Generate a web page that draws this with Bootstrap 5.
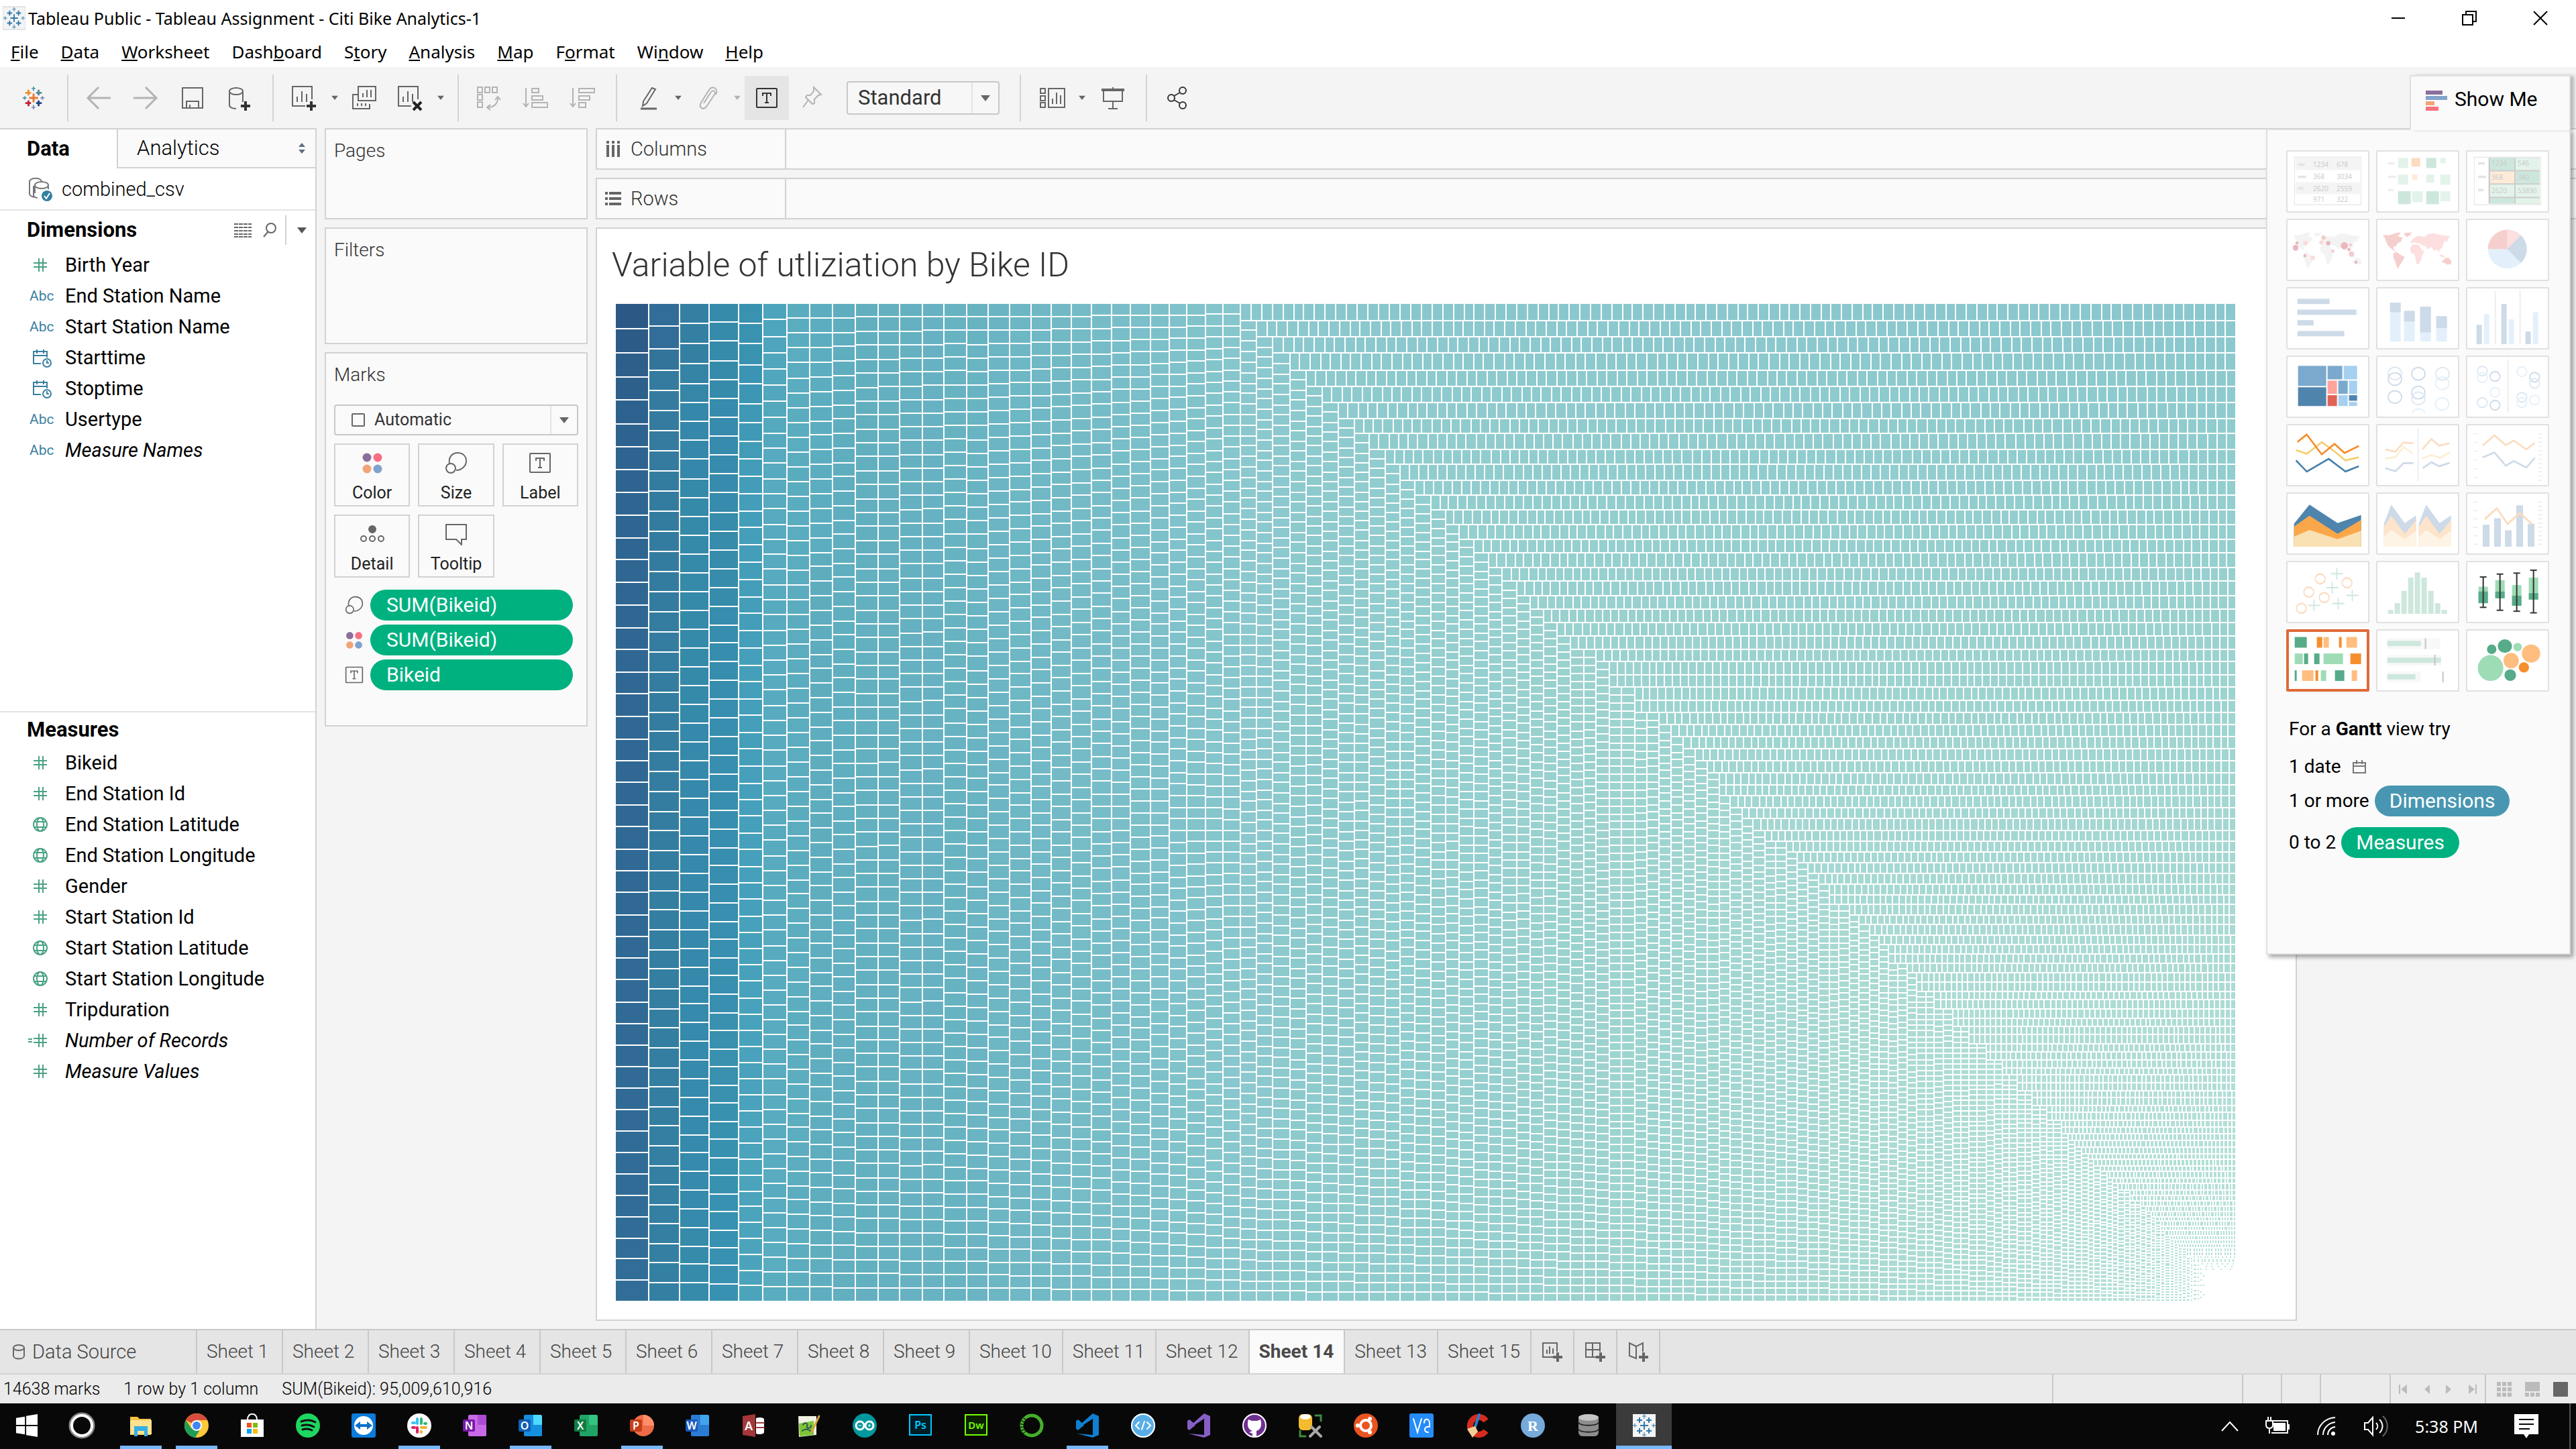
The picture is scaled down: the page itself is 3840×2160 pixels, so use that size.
<!DOCTYPE html>
<html lang="en">
<head>
<meta charset="utf-8">
<meta name="viewport" content="width=device-width, initial-scale=1">
<title>Tableau Public - Tableau Assignment - Citi Bike Analytics-1</title>
<link href="https://cdn.jsdelivr.net/npm/bootstrap@5.3.0/dist/css/bootstrap.min.css" rel="stylesheet">
<style>
:root{--line:#d2d2d2;--chrome:#f4f4f4;--ink:#333;--icon:#666;--green:#00b180}
body{font-family:Roboto,"Liberation Sans",sans-serif;font-size:28px;line-height:40px;color:#000;background:var(--chrome)}
button{font:inherit;color:inherit;background:none;border:0;padding:0}
svg{display:block;flex:none}
.titlebar{height:54px;background:#fff;font:25px/40px "Noto Sans",sans-serif;padding-left:4px}
.titlebar .win{width:106px}
.menubar{height:46px;background:#fff;font:26px/40px "Noto Sans",sans-serif;padding-left:16px;gap:33px}
.menubar a{color:#000;text-decoration:none}
.toolbar{height:91px;color:var(--icon)}
.toolbar button{width:70px;height:66px;display:flex;align-items:center;justify-content:center}
.toolbar .caret{width:22px}
.toolbar .slim{width:66px}
.toolbar .off{color:#b3b3b3}
.toolbar .pressed{background:#e5e5e5;color:#333}
.vsep{width:2px;height:70px;background:#d4d4d4;margin:0 10px 0 14px}
.vsep-wide{margin-left:30px}
.pick{border:2px solid #c8c8c8;border-radius:4px;position:relative;background:#f7f7f7}
.pick select{appearance:none;border:0;background:none;width:100%;height:100%;color:var(--ink);outline:0}
.pick .drop{position:absolute;right:0;top:0;bottom:0;width:40px;border-left:2px solid #e4e4e4;pointer-events:none;color:var(--icon)}
.pick .glyph{position:absolute;left:23px;top:10px;pointer-events:none}
.pick-fit{width:228px;height:50px;font-size:31px;font-weight:300}
.pick-fit select{padding-left:15px}
.pick-mark{height:46px;font-size:25px;font-weight:300;background:#fafafa}
.pick-mark select{padding-left:58px}
.datapane{width:472px;background:#fff;border-top:2px solid var(--line);border-right:2px solid var(--line)}
.ptabs{height:58px}
.ptabs .on{width:174px;font-weight:700;font-size:31px;padding-left:40px;text-align:left}
.ptabs .alt{border-left:2px solid var(--line);border-bottom:2px solid var(--line);background:#fafafa;font-size:31px;font-weight:300;padding:0 14px 0 28px}
.source{height:63px;border-bottom:2px solid #e4e4e4;padding-left:42px;gap:12px;font-size:29px;font-weight:300}
.phead{height:58px;padding:0 13px 0 40px;font-weight:700;font-size:31px}
.flist{list-style:none;margin:0;padding:0;font-size:29px}
.flist li{height:46px;display:flex;align-items:center}
.flist svg{margin:0 15px 0 40px}
.flist .green{color:#4aa283}
.flist .blue{color:#3a7fa0}
.abc{width:82px;padding-left:44px;font-size:21px;margin-right:15px;flex:none}
.dims{height:746px}
.measures{border-top:2px solid #e4e4e4}
.measures .phead{height:52px}
.cards{width:392px;margin:0 12px;gap:12px}
.shelfbox{border:2px solid var(--line);background:#fafafa;padding:12px 12px;font-weight:300;color:var(--ink)}
.h-pages{height:136px}.h-filters{height:174px}.h-marks{height:558px}
.mbtns{display:grid;grid-template-columns:1fr 1fr 1fr;gap:12px;margin:12px 0 18px}
.mbtns button{height:94px;border:2px solid var(--line);font-size:25px;line-height:30px;color:#222;font-weight:400;display:flex;flex-direction:column;align-items:center;justify-content:space-between;padding:10px 0 3px}
.pillrow{height:46px;margin-bottom:6px;padding:0 8px 0 16px;gap:10px}
.pill{background:var(--green);color:#fff;border-radius:23px;height:46px;line-height:46px;font-size:30px;font-weight:400}
.pillrow .pill{padding-left:24px;text-align:left}
.shelf{height:62px;border:2px solid var(--line);border-right:0;background:#fafafa;margin-bottom:12px}
.shelf div{width:282px;border-right:2px solid var(--line);padding-left:12px;gap:14px;font-weight:300;font-size:29px;color:var(--ink)}
.sheetview{background:#fff;border:2px solid var(--line);margin:0 416px 12px 0;padding:22px 88px 26px 28px}
.sheetview h1{font:300 50px/64px Roboto,sans-serif;color:#333;margin:0 0 26px -6px}
#treemap{min-height:0;overflow:hidden}
.showme{position:absolute;top:112px;right:8px;width:454px}
.smtab{width:240px;height:82px;background:#fafafa;border:2px solid #e0e0e0;border-bottom:0;margin-bottom:-2px;position:relative;z-index:1;font-size:30px;gap:11px;padding:0 22px 16px;box-shadow:6px 0 5px -1px rgba(0,0,0,.25)}
.smbody{background:#fafafa;border:2px solid #e0e0e0;box-shadow:4px 4px 6px rgba(0,0,0,.35);padding:30px 28px 142px}
.tiles{display:grid;grid-template-columns:repeat(3,124px);gap:9px 10px}
.tiles button{height:93px;background:#fff;border-radius:2px;box-shadow:inset 0 0 0 2px #e0e0e0}
.tiles button.chosen{box-shadow:inset 0 0 0 4px #e06a38}
.tiles text{font:10px "Open Sans",sans-serif;fill:#c9c9c9}
.hint{padding-left:4px;font-size:28px;margin-top:36px}
.hint .pill{padding:0 22px;font-size:30px;font-weight:400}
.sheets{height:68px;border-top:2px solid #c8c8c8;border-bottom:2px solid #d2d2d2;background:#e5e5e5;font-weight:300;color:#444}
.sheets button{border-right:2px solid #c8c8c8;padding:0 15px 0 14px;min-width:128px;text-align:left;white-space:nowrap}
.sheets .dsrc{width:294px;padding-left:18px;gap:10px;font-size:29px}
.sheets .on{background:#fafafa;font-weight:700;color:#4a4a4a}
.sheets .mini{min-width:64px;width:64px;display:flex;align-items:center;justify-content:center;padding:0}
.status{height:43px;background:#ebebeb;font-size:25px;line-height:44px;padding-left:5px;gap:35px;font-weight:300}
.status .cellbox{border-left:2px solid #c8c8c8}
.taskbar{height:68px;background:#080808;color:#fff;font:25px/40px "Noto Sans",sans-serif}
.taskbar .app{width:83px;display:flex;align-items:center;justify-content:center;border-bottom:5px solid transparent;border-top:3px solid transparent}
.taskbar .run{background:linear-gradient(#76b9ff,#76b9ff) bottom/62px 5px no-repeat border-box}
.taskbar .live{background:linear-gradient(#76b9ff,#76b9ff) bottom/100% 5px no-repeat border-box,#3b3b3b}
.taskbar text{font-family:"Noto Sans",sans-serif;fill:#fff;text-anchor:middle;font-weight:600}
.tray{gap:38px;padding-right:46px;border-right:2px solid #555;margin-right:8px}
</style>
</head>
<body class="d-flex flex-column vh-100 overflow-hidden">

<svg width="0" height="0" class="position-absolute" aria-hidden="true">
 <defs>
  <symbol id="hash" viewBox="0 0 42 40"><path d="M18 10v20M24 10v20M10 17h20M10 23h20" stroke="currentColor" stroke-width="2" fill="none"/></symbol>
  <symbol id="hasheq" viewBox="0 0 42 40"><path d="M18 10v20M24 10v20M10 17h20M10 23h20M2 18h6M2 22h6" stroke="currentColor" stroke-width="2" fill="none"/></symbol>
  <symbol id="globe" viewBox="0 0 42 40"><g stroke="currentColor" stroke-width="2" fill="none"><circle cx="20" cy="20" r="10"/><ellipse cx="20" cy="20" rx="5" ry="10"/><path d="M11 16h18M11 24h18"/></g></symbol>
  <symbol id="caltime" viewBox="0 0 42 40"><g stroke="currentColor" stroke-width="2" fill="none"><path d="M21 29H10V11h20v9M10 17h20M15 8v6M25 8v6"/><circle cx="30" cy="28" r="6"/><path d="M30 24v4h3"/></g></symbol>
  <symbol id="tri" viewBox="0 0 14 10"><path d="M0 1h14L7 10z" fill="currentColor"/></symbol>
  <symbol id="dots4" viewBox="0 0 34 34"><circle cx="9" cy="9" r="6.500" fill="#8a6f9b"/><circle cx="25" cy="9" r="6.500" fill="#f86e82"/><circle cx="9" cy="26" r="6.500" fill="#f1a478"/><circle cx="25" cy="26" r="6.500" fill="#7fa3cd"/></symbol>
  <symbol id="lasso" viewBox="0 0 34 34"><g fill="none" stroke="#666" stroke-width="2"><path d="M7 18C5 8 12 2 19 2c8 0 13 5 13 12 0 8-7 14-15 14"/><circle cx="9" cy="25" r="7"/></g></symbol>
  <symbol id="tbox" viewBox="0 0 34 34"><g fill="none" stroke="currentColor" stroke-width="2"><rect x="2" y="3" width="30" height="28" rx="1"/><path d="M11 14v-4h12v4M17 10v14M14 24h6"/></g></symbol>
  <symbol id="tabl" viewBox="0 0 36 36"><g stroke-width="2" fill="none"><path d="M18 12v12M12 18h12" /><path d="M11 6v8M7 10h8M25 6v8M21 10h8M11 22v8M7 26h8M25 22v8M21 26h8"/><path d="M18 1v7M15 4h6M18 28v7M15 32h6M4 15v6M1 18h6M32 15v6M29 18h6" stroke-width="1"/></g></symbol>
 </defs>
</svg>

<header>
 <div class="titlebar d-flex align-items-center">
  <svg width="34" height="36" viewBox="0 0 36 36" stroke="#2f78ad"><rect width="36" height="36" fill="#f4f4f4" stroke="#ccc"/><use href="#tabl"/></svg>
  <span class="ms-1">Tableau Public - Tableau Assignment - Citi Bike Analytics-1</span>
  <div class="d-flex ms-auto">
   <button class="win" aria-label="Minimize"><svg class="mx-auto" width="24" height="24" fill="none" stroke="#000" stroke-width="2"><path d="M2 12h20"/></svg></button>
   <button class="win" aria-label="Restore"><svg class="mx-auto" width="24" height="24" fill="none" stroke="#000" stroke-width="2"><path d="M2 7h15v15H2zM7 7V2h15v15h-5"/></svg></button>
   <button class="win" aria-label="Close"><svg class="mx-auto" width="24" height="24" fill="none" stroke="#000" stroke-width="2"><path d="M2 2l20 20M22 2L2 22"/></svg></button>
  </div>
 </div>
 <nav class="menubar d-flex align-items-center">
  <a href="#"><u>F</u>ile</a><a href="#"><u>D</u>ata</a><a href="#"><u>W</u>orksheet</a><a href="#">Dash<u>b</u>oard</a><a href="#">S<u>t</u>ory</a><a href="#"><u>A</u>nalysis</a><a href="#"><u>M</u>ap</a><a href="#">F<u>o</u>rmat</a><a href="#">Wi<u>n</u>dow</a><a href="#"><u>H</u>elp</a>
 </nav>
</header>

<div class="toolbar d-flex align-items-center" role="toolbar">
 <button aria-label="Start page" style="width:100px"><svg width="34" height="34" viewBox="0 0 36 36" fill="none"><path d="M18 11v14M11 18h14" stroke="#e8762c" stroke-width="3"/><path d="M10 5v9M5 10h9" stroke="#eb912c" stroke-width="3"/><path d="M26 5v9M22 10h9" stroke="#59879b" stroke-width="3"/><path d="M10 22v9M5 26h9" stroke="#c72035" stroke-width="3"/><path d="M26 22v9M22 26h9" stroke="#1f457e" stroke-width="3"/><path d="M18 0v7M15 3h6M4 15v6M1 18h6" stroke="#5a9bb0" stroke-width="2"/><path d="M18 29v7M15 33h6M32 15v6M29 18h6" stroke="#7f93bd" stroke-width="2"/></svg></button>
 <span class="vsep ms-0"></span>
 <button class="off" aria-label="Back"><svg width="40" height="40" fill="none" stroke="currentColor" stroke-width="3"><path d="M20 4L4 20l16 16M4 20h34"/></svg></button>
 <button class="off" aria-label="Forward"><svg width="40" height="40" fill="none" stroke="currentColor" stroke-width="3"><path d="M20 4l16 16-16 16M36 20H2"/></svg></button>
 <button aria-label="Save"><svg width="40" height="40" fill="none" stroke="currentColor" stroke-width="2"><path d="M5 5h30v30H5zM11 35V25h18v10M16 35v-5"/></svg></button>
 <button aria-label="New data source"><svg width="40" height="40" fill="none" stroke="currentColor" stroke-width="2"><ellipse cx="15" cy="10" rx="10" ry="5"/><path d="M5 10v21c0 3 5 5 10 5M25 10v16"/><path d="M29 25v14M22 32h14" stroke="#333" stroke-width="4"/></svg></button>
 <span class="vsep"></span>
 <button aria-label="New worksheet"><svg width="40" height="40" fill="none" stroke="currentColor" stroke-width="2"><path d="M22 32H3V3h29v19M10 26v-8M17 26V10M24 26V14"/><path d="M31 25v14M24 32h14" stroke="#333" stroke-width="4"/></svg></button>
 <button class="caret" aria-label="New worksheet menu"><svg width="10" height="7"><use href="#tri"/></svg></button>
 <button class="slim" aria-label="Duplicate"><svg width="40" height="40" fill="none" stroke="currentColor" stroke-width="2"><path d="M11 3h26v21H11zM18 19v-6M24 19V8M30 19V8M11 15H3v21h25v-7M10 32v-4M16 32v-4M22 32v-4"/></svg></button>
 <button aria-label="Clear sheet"><svg width="40" height="40" fill="none" stroke="currentColor" stroke-width="2"><path d="M22 32H3V3h29v19M10 26v-8M17 26V10M24 26V14"/><path d="M25 26l12 12M37 26L25 38" stroke="#222" stroke-width="4"/></svg></button>
 <button class="caret" aria-label="Clear menu"><svg width="10" height="7"><use href="#tri"/></svg></button>
 <span class="vsep"></span>
 <button class="off" aria-label="Swap rows and columns"><svg width="40" height="40" fill="none" stroke="currentColor" stroke-width="2"><path d="M3 4h7v8H3zM14 4h7v8h-7zM25 4h7v8h-7zM3 15h7v8H3zM3 26h7v8H3zM18 34c10 0 15-6 15-14M29 23l4-5 4 5M22 30l-5 4 5 4"/></svg></button>
 <button class="off" aria-label="Sort ascending"><svg width="40" height="40" fill="none" stroke="currentColor" stroke-width="2"><path d="M5 5v28M1 28l4 5 4-5M14 6h10v6H14zM14 17h16v6H14zM14 27h23v7H14z"/></svg></button>
 <button class="off" aria-label="Sort descending"><svg width="40" height="40" fill="none" stroke="currentColor" stroke-width="2"><path d="M5 5v28M1 28l4 5 4-5M14 6h23v6H14zM14 17h16v6H14zM14 27h10v7H14z"/></svg></button>
 <span class="vsep"></span>
 <button aria-label="Highlight"><svg width="40" height="40" fill="none" stroke="currentColor" stroke-width="2"><path d="M27 5l5 2-13 21-6 4 1-7z"/><path d="M10 36h24" stroke-width="3"/></svg></button>
 <button class="caret" aria-label="Highlight menu"><svg width="10" height="7"><use href="#tri"/></svg></button>
 <button class="off slim" aria-label="Group members"><svg width="40" height="40" fill="none" stroke="currentColor" stroke-width="2"><path d="M14 28L25 11c3-4 8 0 5 4L18 33c-5 6-12 1-8-6L22 8c5-8 15-1 10 7"/></svg></button>
 <button class="caret off" aria-label="Group menu"><svg width="10" height="7"><use href="#tri"/></svg></button>
 <button class="slim pressed" aria-label="Show mark labels"><svg width="38" height="34"><use href="#tbox"/></svg></button>
 <button class="off" aria-label="Fix axes"><svg width="40" height="40" fill="none" stroke="currentColor" stroke-width="2"><path d="M22 4l11 11-4 1-6 6v6l-3 1-10-10 2-3h5l5-6zM14 23L6 34"/></svg></button>
 <div class="pick pick-fit ms-3"><select aria-label="Fit"><option>Standard</option></select><span class="drop d-flex align-items-center justify-content-center"><svg width="14" height="10"><use href="#tri"/></svg></span></div>
 <span class="vsep vsep-wide"></span>
 <button aria-label="Show or hide cards" class="slim ms-1"><svg width="42" height="40" fill="none" stroke="currentColor" stroke-width="2"><path d="M3 6h7v7H3zM3 17h7v7H3zM3 27h7v7H3zM15 6h24v28H15zM21 29v-8M27 29V12M33 29V16"/></svg></button>
 <button class="caret" aria-label="Cards menu"><svg width="10" height="7"><use href="#tri"/></svg></button>
 <button aria-label="Presentation mode"><svg width="40" height="40" fill="none" stroke="currentColor" stroke-width="2"><path d="M20 4v4M6 9v16h28V9M20 25v11M13 36h14"/><path d="M3 8h34" stroke-width="4"/></svg></button>
 <span class="vsep"></span>
 <button aria-label="Share"><svg width="40" height="40" fill="none" stroke="#333" stroke-width="2"><circle cx="11" cy="20" r="5"/><circle cx="28" cy="9" r="5"/><circle cx="28" cy="31" r="5"/><path d="M15 17l9-5M15 23l9 5"/></svg></button>
</div>

<main class="d-flex flex-grow-1" style="min-height:0">
 <aside class="datapane flex-shrink-0">
  <div class="ptabs d-flex">
   <button class="on">Data</button>
   <button class="alt flex-grow-1 d-flex align-items-center justify-content-between">Analytics <svg width="12" height="16" fill="#5f6f7d"><path d="M6 0l5 6H1zM6 16l5-6H1z"/></svg></button>
  </div>
  <div class="source d-flex align-items-center">
   <svg width="38" height="38" fill="none" stroke="#777" stroke-width="2"><path d="M2 8c0-7 18-7 18 0M2 8v18c0 3 4 4 7 5M8 14v14c0 2 3 4 6 4"/><ellipse cx="20" cy="13" rx="10" ry="5"/><path d="M30 13v6M10 13v12"/><circle cx="28" cy="29" r="8" fill="#3380a0" stroke="none"/><path d="M24 29l3 4 5-8" stroke="#fff"/></svg>
   <span>combined_csv</span>
  </div>
  <section class="dims">
   <div class="phead d-flex align-items-center"><span>Dimensions</span>
    <svg class="ms-auto" width="26" height="22" stroke="#666" stroke-width="2" stroke-dasharray="6 1"><path d="M0 2h26M0 7h26M0 12h26M0 17h26M0 21h26"/></svg>
    <svg class="ms-3" width="22" height="24" fill="none" stroke="#666" stroke-width="2"><circle cx="13" cy="9" r="7"/><path d="M9 14l-7 8"/></svg>
    <span class="ms-2 me-3 ps-1"><svg width="2" height="44"><rect width="2" height="44" fill="#d2d2d2"/></svg></span>
    <svg width="14" height="10" color="#555"><use href="#tri"/></svg></div>
   <ul class="flist">
    <li><svg class="green" width="42" height="40"><use href="#hash"/></svg>Birth Year</li>
    <li><span class="abc blue">Abc</span>End Station Name</li>
    <li><span class="abc blue">Abc</span>Start Station Name</li>
    <li><svg class="blue" width="42" height="40"><use href="#caltime"/></svg>Starttime</li>
    <li><svg class="blue" width="42" height="40"><use href="#caltime"/></svg>Stoptime</li>
    <li><span class="abc blue">Abc</span>Usertype</li>
    <li><span class="abc blue">Abc</span><em>Measure Names</em></li>
   </ul>
  </section>
  <section class="measures">
   <div class="phead d-flex align-items-center">Measures</div>
   <ul class="flist">
    <li><svg class="green" width="42" height="40"><use href="#hash"/></svg>Bikeid</li>
    <li><svg class="green" width="42" height="40"><use href="#hash"/></svg>End Station Id</li>
    <li><svg class="green" width="42" height="40"><use href="#globe"/></svg>End Station Latitude</li>
    <li><svg class="green" width="42" height="40"><use href="#globe"/></svg>End Station Longitude</li>
    <li><svg class="green" width="42" height="40"><use href="#hash"/></svg>Gender</li>
    <li><svg class="green" width="42" height="40"><use href="#hash"/></svg>Start Station Id</li>
    <li><svg class="green" width="42" height="40"><use href="#globe"/></svg>Start Station Latitude</li>
    <li><svg class="green" width="42" height="40"><use href="#globe"/></svg>Start Station Longitude</li>
    <li><svg class="green" width="42" height="40"><use href="#hash"/></svg>Tripduration</li>
    <li><svg class="green" width="42" height="40"><use href="#hasheq"/></svg><em>Number of Records</em></li>
    <li><svg class="green" width="42" height="40"><use href="#hash"/></svg><em>Measure Values</em></li>
   </ul>
  </section>
 </aside>

 <div class="cards d-flex flex-column flex-shrink-0">
  <section class="shelfbox h-pages">Pages</section>
  <section class="shelfbox h-filters">Filters</section>
  <section class="shelfbox h-marks">
   <div class="mb-4">Marks</div>
   <div class="pick pick-mark"><svg class="glyph" width="22" height="22" fill="none" stroke="#666" stroke-width="2"><rect x="2" y="2" width="18" height="18" rx="1"/></svg><select aria-label="Mark type"><option>Automatic</option></select><span class="drop d-flex align-items-center justify-content-center"><svg width="14" height="10"><use href="#tri"/></svg></span></div>
   <div class="mbtns">
    <button><svg width="34" height="34"><use href="#dots4"/></svg>Color</button>
    <button><svg width="34" height="34"><use href="#lasso"/></svg>Size</button>
    <button><svg width="34" height="34" color="#666"><use href="#tbox"/></svg>Label</button>
    <button><svg width="40" height="34" fill="none" stroke="#666" stroke-width="2"><circle cx="20" cy="10" r="5" fill="#666"/><circle cx="7" cy="24" r="4"/><circle cx="20" cy="24" r="4"/><circle cx="33" cy="24" r="4"/></svg>Detail</button>
    <button><svg width="34" height="34" fill="none" stroke="#666" stroke-width="2"><path d="M2 3h30v22h-7v8l-8-8H2z"/></svg>Tooltip</button>
   </div>
   <div class="pillrow d-flex align-items-center"><svg width="28" height="28"><use href="#lasso"/></svg><button class="pill flex-grow-1">SUM(Bikeid)</button></div>
   <div class="pillrow d-flex align-items-center"><svg width="28" height="28"><use href="#dots4"/></svg><button class="pill flex-grow-1">SUM(Bikeid)</button></div>
   <div class="pillrow d-flex align-items-center"><svg width="28" height="28" color="#666"><use href="#tbox"/></svg><button class="pill flex-grow-1">Bikeid</button></div>
  </section>
 </div>

 <div class="d-flex flex-column flex-grow-1" style="min-width:0">
  <div class="shelf d-flex"><div class="d-flex align-items-center"><svg width="24" height="24" stroke="#666" stroke-width="4"><path d="M4 0v4M12 0v4M20 0v4M4 6v18M12 6v18M20 6v18"/></svg>Columns</div></div>
  <div class="shelf d-flex"><div class="d-flex align-items-center"><svg width="24" height="24" stroke="#666" stroke-width="4"><path d="M0 4h4M0 12h4M0 20h4M6 4h18M6 12h18M6 20h18"/></svg>Rows</div></div>
  <section class="sheetview flex-grow-1 d-flex flex-column" style="min-height:0">
   <h1>Variable of utliziation by Bike ID</h1>
   <div id="treemap" class="flex-grow-1"></div>
  </section>
 </div>
</main>

<footer>
 <div class="sheets d-flex">
  <button class="dsrc d-flex align-items-center"><svg width="20" height="24" fill="none" stroke="#666" stroke-width="2"><ellipse cx="10" cy="6" rx="8" ry="4"/><path d="M2 6v12c0 6 16 6 16 0V6"/></svg>Data Source</button>
  <button>Sheet 1</button><button>Sheet 2</button><button>Sheet 3</button><button>Sheet 4</button><button>Sheet 5</button><button>Sheet 6</button><button>Sheet 7</button><button>Sheet 8</button><button>Sheet 9</button><button>Sheet 10</button><button>Sheet 11</button><button>Sheet 12</button><button class="on">Sheet 14</button><button>Sheet 13</button><button>Sheet 15</button>
  <button class="mini" aria-label="New worksheet"><svg width="32" height="32" fill="none" stroke="#666" stroke-width="2"><path d="M17 24H2V3h21v13M8 19v-6M12 19V8M17 19v-8"/><path d="M24 17v14M17 24h14" stroke-width="4"/></svg></button>
  <button class="mini" aria-label="New dashboard"><svg width="32" height="32" fill="none" stroke="#666" stroke-width="2"><path d="M17 24H2V3h21v13M2 13h21M12 3v21"/><path d="M24 17v14M17 24h14" stroke-width="4"/></svg></button>
  <button class="mini" aria-label="New story"><svg width="32" height="32" fill="none" stroke="#666" stroke-width="2"><path d="M23 16V3l-10 5v18L3 22V3l10 5"/><path d="M24 17v14M17 24h14" stroke-width="4"/></svg></button>
 </div>
 <div class="status d-flex">
  <span>14638 marks</span><span>1 row by 1 column</span><span>SUM(Bikeid): 95,009,610,916</span>
  <div class="d-flex ms-auto">
   <span class="cellbox" style="width:283px"></span><span class="cellbox" style="width:58px"></span><span class="cellbox" style="width:58px"></span><span class="cellbox" style="width:104px"></span>
   <span class="cellbox d-flex align-items-center justify-content-center gap-4" style="width:142px"><svg width="14" height="14" fill="#bbb"><path d="M0 0h2v14H0zM12 0v14L3 7z"/></svg><svg width="8" height="14" fill="#bbb"><path d="M8 0v14L0 7z"/></svg><svg width="8" height="14" fill="#bbb"><path d="M0 0v14l8-7z"/></svg><svg width="14" height="14" fill="#bbb"><path d="M12 0h2v14h-2zM2 0v14l9-7z"/></svg></span>
   <span class="cellbox d-flex align-items-center justify-content-center ps-1" style="width:136px;gap:20px"><svg width="22" height="22" fill="#bbb"><path d="M0 0h6v6H0zM8 0h6v6H8zM16 0h6v6h-6zM0 8h6v6H0zM8 8h6v6H8zM16 8h6v6h-6zM0 16h6v6H0zM8 16h6v6H8zM16 16h6v6h-6z"/></svg><svg width="22" height="22" fill="#bbb"><path d="M0 0h22v14H0zM0 16h6v6H0zM8 16h6v6H8zM16 16h6v6h-6z"/></svg><svg width="22" height="22"><rect width="22" height="22" rx="1" fill="#666"/></svg></span>
  </div>
 </div>
 <div class="taskbar d-flex">
  <button class="app" aria-label="Start" style="width:80px"><svg width="34" height="34" viewBox="0 0 36 36" fill="#fff"><path d="M1 6l14-2v13H1zM17 3l18-3v17H17zM1 19h14v13L1 30zM17 19h18v17l-18-3z"/></svg></button>
  <button class="app" aria-label="Cortana" style="width:84px"><svg width="40" height="40" fill="none"><circle cx="20" cy="20" r="17" stroke="#888" stroke-width="5"/><circle cx="20" cy="20" r="15" stroke="#fff" stroke-width="4"/></svg></button>
  <div id="apps" class="d-flex ms-1"></div>
  <div class="tray d-flex align-items-center ms-auto">
   <svg width="28" height="20" fill="none" stroke="#fff" stroke-width="2"><path d="M2 17L14 4l12 13"/></svg>
   <svg width="38" height="32" fill="none" stroke="#fff" stroke-width="2"><path d="M13 8h21v18H10M36 13v8M5 2v6M9 2v6M2 8h10v6c0 4-3 5-5 5s-5-1-5-5zM7 19v8"/><path d="M14 12h16v10H14z" fill="#fff"/></svg>
   <svg width="32" height="32" fill="none" stroke="#fff" stroke-width="2"><path d="M3 29C3 15 14 4 29 3M11 29c0-10 8-18 18-19M18 29c0-6 4-11 11-12"/><circle cx="26" cy="27" r="3" fill="#fff" stroke="none"/></svg>
   <svg width="40" height="36" fill="none" stroke="#fff" stroke-width="2"><path d="M3 13h5l7-8v26l-7-8H3zM20 13c3 3 3 7 0 10M25 8c6 6 6 14 0 20"/><path d="M30 3c9 8 9 22 0 30" stroke="#666"/></svg>
   <span>5:38 PM</span>
   <svg class="ms-3" width="36" height="38"><path d="M0 1h36v30H22l-4 6-4-6H0z" fill="#fff"/><path d="M7 9h22M7 16h22M7 23h16" stroke="#080808" stroke-width="2"/></svg>
  </div>
 </div>
</footer>

<section class="showme" aria-label="Show Me">
 <button class="smtab d-flex align-items-center ms-auto mt-0">
  <svg class="mt-2" width="32" height="32"><path d="M0 1h25v6H0z" fill="#8a6f9b"/><path d="M0 9h32v6H0z" fill="#82a4cb"/><path d="M0 17h13v6H0z" fill="#f1a478"/><path d="M0 25h19v6H0z" fill="#f9717f"/></svg><span class="mt-1">Show Me</span></button>
 <div class="smbody">
  <div class="tiles" id="tiles"></div>
  <div class="hint">
   <div class="mb-3">For a <b>Gantt</b> view try</div>
   <div class="d-flex align-items-center">1 date <svg class="ms-3" width="22" height="20" fill="none" stroke="#777" stroke-width="2"><path d="M2 4h18v15H2zM2 9h18M7 0v6M15 0v6"/></svg></div>
   <div class="d-flex align-items-center mt-2 gap-2">1 or more <button class="pill" style="background:#4996b2">Dimensions</button></div>
   <div class="d-flex align-items-center mt-3 gap-2">0 to 2 <button class="pill">Measures</button></div>
  </div>
 </div>
</section>

<script>
// ---- Treemap: sorted mark sizes given as [rank, area] knots ----
const KNOTS=[[0,1900],[2,1810],[6,1730],[15,1690],[46,1600],[48,1410],[97,1350],[100,1270],[150,1240],[204,1160],[210,990],[262,890],[270,810],[330,785],[400,760],[470,735],[540,710],[700,685],[900,668],[1100,625],[1281,580],[2100,398],[5838,246],[11341,84],[12681,45],[13237,24],[13492,11],[13600,6],[13800,2.5],[14637,.2]];
const RAMP=[[0,184,227,218],[84,177,222,214],[246,154,210,207],[400,138,200,206],[580,116,187,199],[650,108,181,196],[700,99,176,192],[800,88,171,191],[950,70,160,187],[1150,58,147,178],[1270,53,136,169],[1400,52,124,159],[1560,50,112,153],[1720,47,101,145],[1900,44,88,133]];
function lerp(table,x){
  let k=1;while(k<table.length-1&&table[k][0]<x)k++;
  const a=table[k-1],b=table[k],t=(x-a[0])/(b[0]-a[0]);
  return a.slice(1).map((v,i)=>v+(b[i+1]-v)*t);
}
function drawTreemap(){
  const host=document.getElementById('treemap'),W=host.clientWidth&~1,H=host.clientHeight&~1;
  const N=14638,vals=[];let sum=0;
  for(let i=0;i<N;i++){const v=lerp(KNOTS,i)[0];vals.push(v);sum+=v}
  const k=W*H/sum,PHI=1.62,buckets={};
  const snap=v=>Math.round(v/2)*2;
  let x=0,y=0,i=0;
  while(i<N&&W-x>.5&&H-y>.5){
    const w=W-x,h=H-y,vert=w>=h,len=vert?h:w;
    let s=0,j=i,best=Infinity;
    while(j<N){
      const s2=s+vals[j]*k,t=s2/len,side=vals[j]*k/t,r=t/side,score=Math.abs(Math.log(r/PHI));
      if(score>best)break;
      best=score;s=s2;j++;
    }
    const t=s/len;let p=0;
    for(let m=i;m<j;m++){
      const d=vals[m]*k/t;
      const r=vert?[x,y+p,x+t,y+p+d]:[x+p,y,x+p+d,y+t];p+=d;
      const a=snap(r[0]),b=snap(r[1]),c=snap(r[2])-a-2,e=snap(r[3])-b-2;
      if(c>0&&e>0){const q=Math.round(vals[m]/8)*8;(buckets[q]=buckets[q]||[]).push(`M${a} ${b}h${c}v${e}h${-c}z`)}
    }
    if(vert)x+=t;else y+=t;
    i=j;
  }
  host.innerHTML=`<svg width="${W}" height="${H}" shape-rendering="crispEdges" role="img" aria-label="Treemap of bikes by Bikeid">`+Object.entries(buckets).map(([q,d])=>`<path fill="rgb(${lerp(RAMP,+q).map(Math.round)})" d="${d.join('')}"/>`).join('')+'</svg>';
}
drawTreemap();addEventListener('resize',drawTreemap);

// ---- Show Me thumbnails ----
const R=(x,y,w,h,f)=>`<rect x="${x}" y="${y}" width="${w}" height="${h}" fill="${f}"/>`;
const E=(x,y,rx,ry,f)=>`<ellipse cx="${x}" cy="${y}" rx="${rx}" ry="${ry}" fill="${f}"/>`;
const O=(x,y,rx,ry,c)=>`<ellipse cx="${x}" cy="${y}" rx="${rx}" ry="${ry}" fill="none" stroke="${c}" stroke-width="5"/>`;
const L=(p,c,w=7)=>`<polyline points="${p}" fill="none" stroke="${c}" stroke-width="${w}" stroke-linejoin="round"/>`;
const P=(p,f)=>`<polygon points="${p}" fill="${f}"/>`;
const X=(x,y,s)=>`<text x="${x}" y="${y}">${s}</text>`;
const A='#cddae8',B='#e3f0fb',C='#cde7dc',D='#e3f3e9',G='#eee';
const NA='30,62 60,62 75,58 100,52 112,54 96,66 118,72 112,86 96,94 88,104 76,106 80,116 92,126 82,122 66,112 52,100 46,88 38,72',GL='125,54 160,52 152,62 138,70 128,62',SA='78,130 92,126 108,136 128,146 118,160 108,174 100,184 104,190 94,186 86,164 76,144',AF='152,112 162,98 184,98 196,104 204,118 216,124 206,138 202,156 190,172 180,172 176,150 170,134 156,130',EU='154,92 162,78 180,66 200,66 216,70 232,58 260,56 290,62 332,66 322,74 318,88 306,84 300,98 296,110 286,116 280,128 272,116 262,122 254,116 248,106 232,116 222,104 206,100 196,94 178,92 168,88 160,94',ID='280,134 300,138 312,146 292,146',AU='292,164 312,148 322,148 336,158 336,172 318,174 304,166';
const world=(a,b)=>P(NA,a)+P(GL,a)+P(SA,a)+P(AF,b)+P(EU,b)+P(ID,b)+P(AU,a);
const ticks=(x,n,h,s)=>Array.from({length:n},(_,i)=>R(x,h+i*s,18,4,G)).join('');
const TALL=236,LOW=193;
const tiles=[
['Text table',TALL,`<rect x="37" y="26" width="297" height="180" fill="#fff" stroke="#e4e4e4" stroke-width="3"/>`+R(41,29,289,46,'#f4f4f4')+R(41,121,289,45,'#f4f4f4')+R(53,50,30,9,'#e4e4e4')+R(53,96,36,9,'#e4e4e4')+R(53,139,24,9,'#e4e4e4'),X(40,25,'1234')+X(75,25,'678')+X(40,43,'368')+X(75,43,'3034')+X(40,61,'2620')+X(75,61,'2559')+X(40,77,'971')+X(75,77,'322')],
['Heat map',TALL,R(53,45,30,9,G)+R(53,96,36,9,G)+R(53,146,24,9,G)+R(98,29,45,38,D)+R(158,29,39,33,'#fbdcc0')+R(224,29,45,38,C)+R(287,29,24,20,D)+R(98,92,45,38,D)+R(161,92,24,20,'#fdebd8')+R(224,92,36,31,D)+R(287,92,45,38,D)+R(98,155,57,49,C)+R(161,155,48,41,D)+R(224,155,57,49,C)+R(287,155,45,38,D)],
['Highlight table',TALL,`<rect x="37" y="26" width="297" height="180" fill="#fff" stroke="#e4e4e4" stroke-width="3"/>`+R(101,29,229,173,'#ccc')+R(54,45,30,9,'#e4e4e4')+R(54,96,36,9,'#e4e4e4')+R(54,146,24,9,'#e4e4e4')+R(108,29,108,46,C)+R(222,29,108,46,D)+R(108,80,108,45,'#fdebd8')+R(222,80,108,45,C)+R(108,130,108,46,D)+R(222,130,108,46,D)+R(108,181,108,20,C)+R(222,181,108,20,D),X(38,23,'1234')+X(77,23,'546')+X(38,44,'368')+X(77,44,'340')+X(38,64,'2620')+X(77,64,'53890')],
['Symbol map',TALL,world('#f3f3f3','#f3f3f3')+[[48,92,7,'#e9b7bd'],[42,110,13,'#e9b7bd'],[86,92,10,'#fbdada'],[84,140,7,'#e9b7bd'],[119,148,10,'#fbdada'],[167,72,10,'#f4cccc'],[158,90,10,'#fbdada'],[188,93,10,'#e9b7bd'],[209,122,7,'#f4cccc'],[260,102,16,'#e9b7bd'],[281,117,7,'#e9b7bd'],[288,99,7,'#f4cccc'],[292,134,12,'#f4cccc'],[312,165,7,'#e9b7bd']].map(c=>E(c[0],c[1],c[2],c[2]*.84,c[3])).join('')],
['Filled map',TALL,world('#f5cfcd','#fddfdf')],
['Pie chart',TALL,E(185,115,87,73,B)+`<path d="M185 115V42A87 73 0 0 0 98 115z" fill="#f5cfcd"/><path d="M185 115V42A87 73 0 0 1 246 63z" fill="#fddfdf"/><path d="M185 115L246 63A87 73 0 0 1 246 167z" fill="${A}"/>`],
['Horizontal bars',TALL,R(50,44,144,20,A)+R(50,85,264,20,A)+R(50,125,72,20,A)+R(50,166,210,20,A)],
['Stacked bars',TALL,R(62,59,48,147,B)+R(62,59,48,36,A)+R(125,90,48,116,B)+R(125,90,48,40,A)+R(197,74,48,132,B)+R(197,74,48,97,A)+R(269,110,48,96,B)+R(269,110,48,45,A)],
['Side-by-side bars',TALL,R(128,14,6,202,G)+R(239,14,6,202,G)+R(47,143,24,73,A)+R(80,102,24,114,B)+R(158,64,24,152,A)+R(191,122,24,94,B)+R(266,168,24,48,A)+R(299,95,24,121,B)],
['Treemap',TALL,R(53,39,126,76,'#7ba9ce')+R(53,120,126,71,'#4f84ad')+R(185,39,66,51,'#7ba9ce')+R(257,39,60,51,'#a6d0f0')+R(185,95,42,50,'#ffa49d')+R(233,95,42,50,'#7ba9ce')+R(281,95,36,50,'#a6d0f0')+R(185,150,42,41,'#e16358')+R(233,150,42,41,'#a6d0f0')+R(281,150,36,21,'#4f84ad')+R(281,176,36,15,'#a6d0f0')],
['Circle views',TALL,O(84,68,30,24,'#dbe7f2')+O(84,89,30,24,A)+O(84,157,30,24,A)+O(189,69,30,24,A)+O(189,140,30,24,A)+O(189,162,30,24,'#dbe7f2')+`<path d="M161 220c4-24 52-24 58 0" fill="none" stroke="${B}" stroke-width="5"/>`+O(297,69,30,24,'#dbe7f2')+O(296,105,30,24,B)+O(295,183,30,24,B)],
['Side-by-side circles',TALL,R(185,14,6,202,G)+O(73,59,22,18,'#dbe7f2')+O(73,84,22,18,B)+O(130,79,22,18,A)+O(130,139,22,18,B)+O(73,178,22,18,'#dbe7f2')+O(130,188,22,18,A)+O(250,61,22,18,B)+O(307,82,22,18,A)+O(307,105,22,18,'#dbe7f2')+O(250,158,22,18,'#dbe7f2')+O(250,178,22,18,B)+O(307,168,22,18,B)],
['Continuous lines',TALL,L('44,99 92,113 159,69 215,103 265,138 325,126','#f6cd6d')+L('50,68 92,40 159,115 216,75 261,110 325,83','#f58b26')+L('44,138 92,180 190,132 265,180 325,160','#4781ad')],
['Discrete lines',TALL,R(185,14,6,202,G)+L('41,96 86,105 123,70 167,73','#fbdcc0')+L('41,131 86,125 123,88 163,111','#fdeed2')+L('41,167 86,179 123,148 167,148',A)+L('207,96 247,57 282,82 329,73','#fbdcc0')+L('205,130 247,118 287,128 329,107','#fdeed2')+L('209,167 247,145 282,160 329,147',A)],
['Dual lines',TALL,ticks(33,6,35,33)+ticks(324,12,35,16)+L('74,82 127,43 178,80 214,63 270,96 308,72','#fbdcc0')+L('74,127 127,108 178,158 214,140 270,165 308,128',A)],
['Area chart',LOW,P('35,97 104,38 230,95 335,70 335,168 35,168','#4f84ad')+P('35,106 104,72 230,128 335,85 335,168 35,168','#faa74a')+P('35,137 104,116 230,145 335,119 335,168 35,168','#f9e1b3')],
['Discrete area',LOW,[35,191].map(o=>`<g transform="translate(${o} 0)">`+P('0,97 33,38 93,95 144,71 144,168 0,168',A)+P('0,106 33,72 93,128 144,85 144,168 0,168','#fde4ca')+P('0,137 33,116 93,144 144,119 144,168 0,168','#fef4e6')+'</g>').join('')],
['Dual combination',LOW,ticks(33,6,28,26)+ticks(324,11,28,13)+R(75,100,30,68,A)+R(126,80,30,88,A)+R(174,117,30,51,A)+R(225,40,30,128,A)+R(276,97,30,71,A)+L('84,83 138,49 186,98 240,64 294,97','#fbdcc0')],
['Scatter plot',LOW,O(152,56,22,15,'#fbdcc0')+O(101,97,22,15,'#fbdcc0')+O(170,114,22,15,'#fbdcc0')+O(68,147,22,15,'#fbdcc0')+O(272,68,22,15,'#fbdcc0')+[[227,40],[206,83],[296,107],[233,132],[125,138]].map(p=>R(p[0]-27,p[1]-2,54,4,C)+R(p[0]-3,p[1]-18,5,36,C)).join('')],
['Histogram',LOW,[12,33,71,112,128,112,71,33,12].map((h,i)=>R(53+i*30,164-h,24,h,C)).join('')],
['Box plot',LOW,[[56,80,95,131,50,144],[131,60,95,116,41,153],[206,75,108,139,38,156],[281,52,100,120,29,161]].map(b=>R(b[0],b[1],42,b[3]-b[1],'#9edcb6')+R(b[0],b[2],42,b[3]-b[2],'#57ab88')+R(b[0]+18,b[4],6,b[5]-b[4],'#333')+R(b[0]+6,b[4]-2,30,4,'#333')+R(b[0]+6,b[5]-2,30,4,'#333')).join('')],
['Gantt',LOW,R(38,24,54,33,'#57ab88')+R(137,24,24,33,'#f58f2d')+R(167,24,24,33,'#ffbd80')+R(236,24,12,33,'#f58f2d')+R(269,24,48,33,'#ffbd80')+R(38,75,36,33,'#9edcb6')+R(80,75,18,33,'#57ab88')+R(125,75,24,33,'#57ab88')+R(167,75,87,33,'#9edcb6')+R(287,75,48,33,'#f58f2d')+R(38,127,9,33,'#57ab88')+R(71,127,51,33,'#ffbd80')+R(131,127,12,33,'#f58f2d')+R(155,127,24,33,'#9edcb6')+R(218,127,42,33,'#57ab88')+R(293,127,24,33,'#ffbd80')],
['Bullet graph',LOW,R(50,28,237,33,'#f8f8f8')+R(50,79,240,33,'#f8f8f8')+R(50,131,150,33,'#f8f8f8')+R(50,36,150,16,C)+R(50,88,240,16,C)+R(50,139,126,16,C)+R(218,28,6,33,'#c4c4c4')+R(260,79,6,33,'#c4c4c4')+R(296,131,6,33,'#c4c4c4')],
['Packed bubbles',LOW,E(110,120,57,40,'#9edcb6')+E(115,62,21,15,'#57ab88')+E(174,52,32,21,'#57ab88')+E(231,55,19,13,'#9edcb6')+E(202,97,34,24,'#ffbd80')+E(291,75,41,28,'#ffbd80')+E(259,118,23,16,'#f58f2d')+E(198,142,26,18,'#57ab88')]];
document.getElementById('tiles').innerHTML=tiles.map(([n,u,g,t=''])=>`<button aria-label="${n}" class="${n=='Gantt'?'chosen':''}"><svg width="124" height="93"><g transform="scale(.3333 ${93/u})">${g}</g>${t}</svg></button>`).join('');

// ---- Taskbar applications ----
const office=(a,b,c,ch)=>`<rect x="8" y="2" width="27" height="32" rx="2" fill="${a}"/><path d="M22 2h11l2 2v13H22z" fill="${b}"/><rect x="0" y="9" width="18" height="18" rx="2" fill="${c}"/><text x="9" y="24" font-size="16">${ch}</text>`;
const disc=(f,g)=>`<circle cx="18" cy="18" r="18" fill="${f}"/>${g}`;
const S=(d,c,w)=>`<path d="${d}" fill="none" stroke="${c}" stroke-width="${w}" stroke-linecap="round"/>`;
const F=(d,c)=>`<path d="${d}" fill="${c}"/>`;
const vs=(a,b)=>F('M26 0l9 4v28l-9 4L2 30l24 2V8L10 20l-6 5-3-2V11l3-2 6 5z',a)+F('M26 8v18L12 17z',b);
const apps=[
['File Explorer',F('M2 5h11l3 3h17v24H2z','#f5c242')+F('M2 10h32v21H2z','#ffe28f')+F('M8 19h20v15h-5v-8H13v8H8z','#38aee6'),1],
['Chrome',disc('#fbc93a',F('M18 18L2 10A18 18 0 0 1 34 10H18z','#d94b3d')+F('M18 18l-8 4L2 10a18 18 0 0 0 14 26l6-10z','#1f9d58')+'<circle cx="18" cy="18" r="8" fill="#fff"/><circle cx="18" cy="18" r="6" fill="#4285f4"/>'),1],
['Store',F('M1 9h34v26H1z','#fff')+S('M11 9c0-11 14-11 14 0','#fff',2)+R(10,14,7,7,'#f25022')+R(19,14,7,7,'#7fba00')+R(10,23,7,7,'#00a4ef')+R(19,23,7,7,'#ffb900')],
['Spotify',disc('#1ed760',S('M8 12c8-3 16-2 21 1M9 18c7-2 13-1 18 2M10 24c6-2 10-1 14 1','#111',3))],
['TeamViewer','<rect width="36" height="36" rx="3" fill="#0b7bdc"/><circle cx="18" cy="18" r="14" fill="#fff"/>'+F('M5 18l8-6v4h10v-4l8 6-8 6v-4H13v4z','#0b6fca')],
['Slack',disc('#fff',S('M15 8v7M8 14h3','#36c5f0',4)+S('M21 15V8M28 15h-2','#2eb67d',4)+S('M21 21h7M21 27v1','#ecb22e',4)+S('M15 21v7M8 21h3','#e01e5a',4)),1],
['OneNote',office('#c86ae6','#ae4bd5','#7719aa','N')],
['Outlook',office('#1490df','#50d9ff','#0f5fb5','O'),1],
['Excel',office('#21a366','#33c481','#107c41','X')],
['PowerPoint','<circle cx="20" cy="18" r="16" fill="#ed6c47"/>'+F('M20 2a16 16 0 0 1 16 16H20z','#ff8f6b')+'<rect x="0" y="9" width="18" height="18" rx="2" fill="#c43e1c"/><text x="9" y="24" font-size="16">P</text>',1],
['Word',office('#2b7cd3','#41a5ee','#185abd','W')],
['Access',F('M2 4l19-3v34L2 32z','#a4373a')+F('M22 7c5-2 12-1 12 2v19c0 3-8 4-12 2z','#fff')+S('M23 14h11M23 21h11','#a4373a',2)+'<text x="11" y="25" font-size="18">A</text>'],
['Notepad++',F('M2 4h27v28l-26 3z','#eef2e0')+F('M3 15l22-4v21l-21 2z','#7ec636')+S('M33 4L22 28','#d9a33c',3)+S('M9 17c3-5 8-2 6 2s6 4 6-1M8 26c3-3 9-3 12 0','#355',2)],
['Arduino',disc('#00979d','<g fill="none" stroke="#fff" stroke-width="3"><circle cx="11" cy="18" r="6"/><circle cx="25" cy="18" r="6"/></g>'+S('M9 18h4M23 18h4M25 16v4','#fff',1))],
['Photoshop','<rect x="2" y="2" width="32" height="30" fill="#001d26" stroke="#00c8ff" stroke-width="2"/><text x="18" y="23" font-size="16" style="fill:#00c8ff">Ps</text>'],
['Dreamweaver','<rect x="2" y="2" width="32" height="30" fill="#0b2000" stroke="#75ff00" stroke-width="2"/><text x="18" y="23" font-size="15" style="fill:#75ff00">Dw</text>'],
['Anaconda','<circle cx="18" cy="18" r="15" fill="none" stroke="#43b02a" stroke-width="5"/><path d="M8 28a14 14 0 0 1 3-21" fill="none" stroke="#080808" stroke-width="7" stroke-dasharray="1 3"/>'],
['Visual Studio Code',vs('#0f7fd2','#080808'),1],
['Brackets',disc('#5aaee8','<circle cx="18" cy="18" r="17" fill="none" stroke="#fff" stroke-width="2"/>'+S('M12 13l-5 5 5 5M24 13l5 5-5 5M20 12l-4 12','#fff',2))],
['Visual Studio',vs('#865fc5','#080808')],
['GitHub Desktop',disc('#6f2f91','<circle cx="18" cy="18" r="17" fill="none" stroke="#fff" stroke-width="2"/>'+F('M9 9l5 2h8l5-2c2 6 2 15-6 17v9h-6v-5l-5-2 5-2c-8-2-8-11-6-17z','#fff'))],
['SQL tools','<rect x="1" y="1" width="20" height="24" rx="6" fill="#f5bb2c"/><ellipse cx="11" cy="5" rx="8" ry="4" fill="#fff"/>'+S('M26 3h8v8M3 26v8h8','#3d8b3d',3)+S('M18 34l14-14M20 20l14 14','#aaa',4)],
['Ubuntu',disc('#e95420','<circle cx="18" cy="18" r="8" fill="none" stroke="#fff" stroke-width="4"/><g fill="#fff"><circle cx="6" cy="18" r="3"/><circle cx="24" cy="8" r="3"/><circle cx="24" cy="28" r="3"/></g>')],
['VNC Viewer','<rect width="36" height="36" rx="3" fill="#258cfb"/>'+S('M6 8l6 20L18 8M22 14c0-8 8-6 8 0v4M30 20c-8-2-10 8-2 8','#fff',2)],
['CCleaner','<path d="M31 11A13 13 0 1 0 31 26" fill="none" stroke="#d62b1f" stroke-width="9"/>'+S('M21 2l-6 18','#2b7ec9',4)+F('M3 23l12-4 4 8-8 9z','#f2cf94')],
['R',disc('#75aadb','<text x="18" y="26" font-size="22" style="font-family:Liberation Serif,serif">R</text>')],
['Database','<g fill="#8d8d8d"><rect x="3" y="3" width="30" height="31" rx="6"/></g><ellipse cx="18" cy="6" rx="15" ry="5" fill="#c4c4c4"/>'+S('M3 14c4 5 26 5 30 0M3 24c4 5 26 5 30 0','#222',2)],
['Tableau','<rect x="1" y="1" width="34" height="34" fill="#f4f4f4"/><g stroke="#2f78ad"><use href="#tabl"/></g>',2]];
document.getElementById('apps').innerHTML=apps.map(([n,g,s=0])=>`<button class="app ${['','run','live'][s]}" aria-label="${n}"><svg width="36" height="36" viewBox="0 0 36 36">${g}</svg></button>`).join('');
</script>
<script src="https://cdn.jsdelivr.net/npm/bootstrap@5.3.0/dist/js/bootstrap.bundle.min.js"></script>
</body>
</html>
